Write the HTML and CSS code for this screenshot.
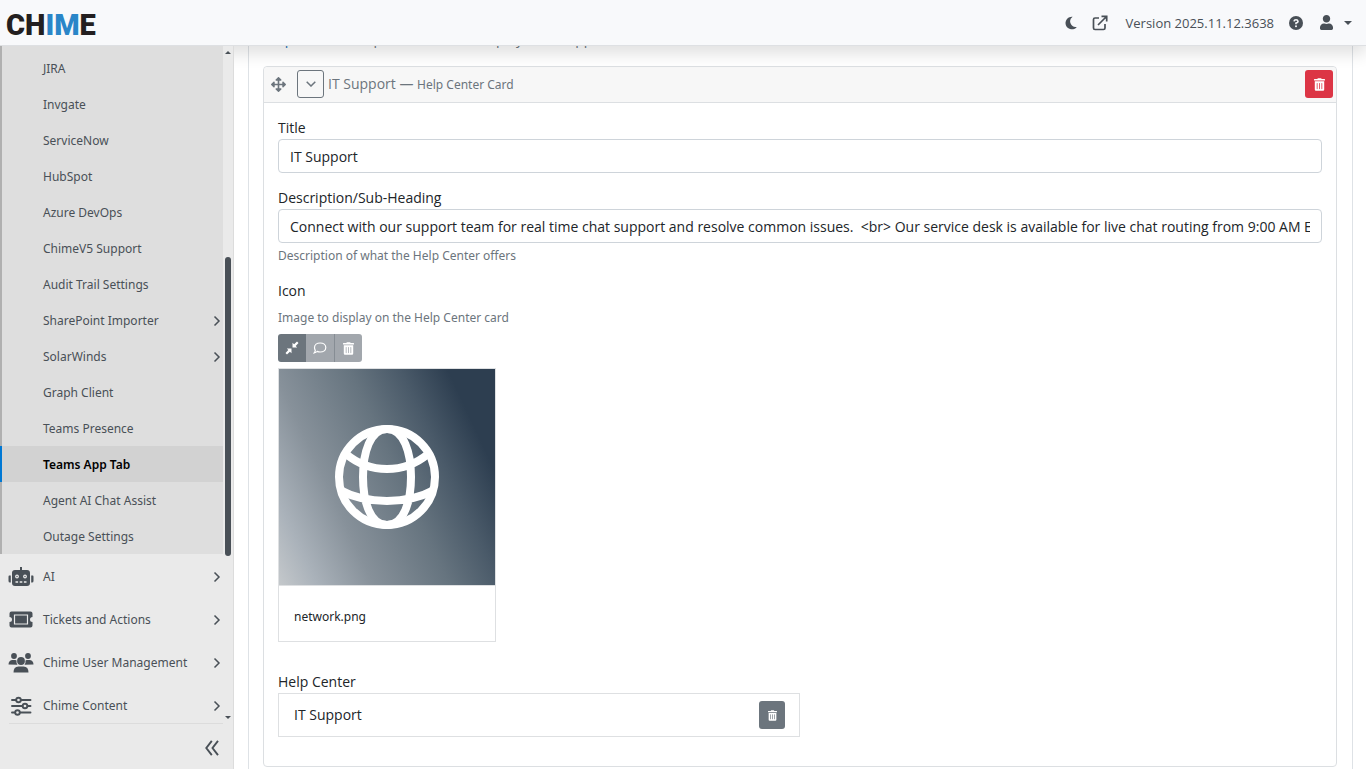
FILE: index.html
```html
<!DOCTYPE html>
<html lang="en">
<head>
<meta charset="utf-8">
<title>Chime - Teams App Tab</title>
<link rel="stylesheet" href="styles.css">
</head>
<body>
<svg class="defs" aria-hidden="true">
  <symbol id="trash" viewBox="0 0 448 512"><path fill="currentColor" d="M32 464a48 48 0 0 0 48 48h288a48 48 0 0 0 48-48V128H32zm272-256a16 16 0 0 1 32 0v224a16 16 0 0 1-32 0zm-96 0a16 16 0 0 1 32 0v224a16 16 0 0 1-32 0zm-96 0a16 16 0 0 1 32 0v224a16 16 0 0 1-32 0zM432 32H312l-9.400-18.700A24 24 0 0 0 281.100 0H166.800a23.720 23.720 0 0 0-21.400 13.300L136 32H16A16 16 0 0 0 0 48v32a16 16 0 0 0 16 16h416a16 16 0 0 0 16-16V48a16 16 0 0 0-16-16z"/></symbol>
  <symbol id="chev" viewBox="0 0 8 12"><path d="M1.500 1.500 6 6 1.500 10.500" fill="none" stroke="currentColor" stroke-width="1.500"/></symbol>
</svg>

<header class="topbar">
  <a class="logo" href="#">CH<span>IM</span>E</a>
  <div class="tools">
    <button class="tool moon" aria-label="Dark mode"><svg width="14" height="14" viewBox="0 0 14 14"><path fill="currentColor" d="M8.600.8A6.300 6.300 0 1 0 12.800 10.900 5.600 5.600 0 0 1 8.600.8z"/></svg></button>
    <a class="tool ext" href="#" aria-label="Open in new window"><svg width="16" height="16" viewBox="0 0 16 16" fill="none" stroke="currentColor" stroke-width="1.700"><path d="M7 3H3Q1.500 3 1.500 4.500V13q0 1.500 1.500 1.500h8.500q1.500 0 1.500-1.500V9M9.500 1.300h5.200v5.200M14.500 1.500 6 10"/></svg></a>
    <span class="version">Version 2025.11.12.3638</span>
    <button class="tool help" aria-label="Help"><svg width="14" height="14" viewBox="0 0 14 14"><circle cx="7" cy="7" r="7" fill="currentColor"/><path d="M5 5.400Q5.200 3.800 7 3.800T9 5.400Q9 6.500 7 7.100V8.300" fill="none" stroke="#f8f9fb" stroke-width="1.600"/><circle cx="7" cy="10.300" r="1" fill="#f8f9fb"/></svg></button>
    <button class="tool account" aria-label="Account"><svg width="13" height="15" viewBox="0 0 448 512"><path fill="currentColor" d="M224 256c70.700 0 128-57.300 128-128S294.700 0 224 0 96 57.300 96 128s57.300 128 128 128zm89.600 32h-16.700c-22.200 10.200-46.900 16-72.900 16s-50.600-5.800-72.900-16h-16.700C60.200 288 0 348.200 0 422.400V464c0 26.500 21.500 48 48 48h352c26.500 0 48-21.500 48-48v-41.600c0-74.200-60.200-134.400-134.400-134.400z"/></svg><svg width="8" height="4" viewBox="0 0 8 4"><path d="M0 0h8L4 4z" fill="currentColor"/></svg></button>
  </div>
</header>

<div class="shell">
  <aside class="sidebar">
    <div class="scroller">
      <nav class="menu">
        <ul class="submenu">
          <li><a href="#">JIRA</a></li>
          <li><a href="#">Invgate</a></li>
          <li><a href="#">ServiceNow</a></li>
          <li><a href="#">HubSpot</a></li>
          <li><a href="#">Azure DevOps</a></li>
          <li><a href="#">ChimeV5 Support</a></li>
          <li><a href="#">Audit Trail Settings</a></li>
          <li><a href="#">SharePoint Importer<svg class="chev"><use href="#chev"/></svg></a></li>
          <li><a href="#">SolarWinds<svg class="chev"><use href="#chev"/></svg></a></li>
          <li><a href="#">Graph Client</a></li>
          <li><a href="#">Teams Presence</a></li>
          <li><a href="#" class="active">Teams App Tab</a></li>
          <li><a href="#">Agent AI Chat Assist</a></li>
          <li><a href="#">Outage Settings</a></li>
        </ul>
        <ul class="groups">
          <li><a href="#"><svg class="gi" viewBox="0 0 26 22"><g fill="currentColor"><path d="M12 1h2v4h-2zM7 4h12q3 0 3 3v10q0 3-3 3H7q-3 0-3-3V7q0-3 3-3zM1 9.500h1.800v7H2q-1.500 0-1.500-1.500v-4Q.5 9.800 1 9.500zM23.200 9.500H25q.5.300.5 1.500v4q0 1.500-1.500 1.500h-.8z"/></g><g fill="#eaeaea"><circle cx="9" cy="10.500" r="1.900"/><circle cx="17" cy="10.500" r="1.900"/><path d="M7.500 15.200h2.600v1.600H7.500zM11.700 15.200h2.600v1.600h-2.600zM15.900 15.200h2.600v1.600h-2.600z"/></g><g fill="currentColor"><circle cx="9" cy="10.500" r=".7"/><circle cx="17" cy="10.500" r=".7"/></g></svg>AI<svg class="chev"><use href="#chev"/></svg></a></li>
          <li><a href="#"><svg class="gi" viewBox="0 0 26 22"><path fill="currentColor" d="M3.500 2.500h19q2 0 2 2V8a2.500 2.500 0 0 0 0 5v3.500q0 2-2 2h-19q-2 0-2-2V13a2.500 2.500 0 0 0 0-5V4.500q0-2 2-2z"/><path d="M6.500 6h13v9h-13z" fill="none" stroke="#eaeaea" stroke-width="1.200"/></svg>Tickets and Actions<svg class="chev"><use href="#chev"/></svg></a></li>
          <li><a href="#"><svg class="gi" viewBox="0 0 26 22" fill="currentColor"><circle cx="6" cy="4" r="2.900"/><circle cx="20" cy="4" r="2.900"/><circle cx="13" cy="9" r="3.900"/><path d="M.5 12.500Q.6 8.500 4 8h3.300q.8 0 1.200.5-.4 2.300 1 4.200zM25.500 12.500Q25.400 8.500 22 8h-3.300q-.8 0-1.200.5.400 2.300-1 4.200zM5.500 20.500q0-6 5-6h5q5 0 5 6z"/></svg>Chime User Management<svg class="chev"><use href="#chev"/></svg></a></li>
          <li><a href="#"><svg class="gi" viewBox="0 0 26 22" fill="none" stroke="currentColor" stroke-width="1.900" stroke-linecap="round"><path d="M4 5h4M13 5h9.500M4 11h10M20 11h2.500M4 17.500h3M12 17.500h10.500"/><circle cx="10.500" cy="5" r="2.300"/><circle cx="17" cy="11" r="2.300"/><circle cx="9.500" cy="17.500" r="2.300"/></svg>Chime Content<svg class="chev"><use href="#chev"/></svg></a></li>
        </ul>
      </nav>
      <div class="track" aria-hidden="true"><i class="up"></i><i class="thumb"></i><i class="down"></i></div>
    </div>
    <div class="side-foot"><button class="collapse" aria-label="Collapse menu"><svg width="14" height="16" viewBox="0 0 14 16" fill="none" stroke="currentColor" stroke-width="1.900"><path d="M6.800.8 1.300 8l5.500 7.200M13 .8 7.500 8l5.500 7.200"/></svg></button></div>
  </aside>

  <main class="main">
    <div class="panel">
      <p class="intro"><a href="#">Help Center</a> Setup for centers to display in the app</p>
      <section class="card">
        <div class="card-head">
          <svg class="move" viewBox="0 0 512 512"><path fill="currentColor" d="M352.201 425.775l-79.196 79.196c-9.373 9.373-24.568 9.373-33.941 0l-79.196-79.196c-15.119-15.119-4.411-40.971 16.971-40.970h51.162L228 284H127.196v51.162c0 21.382-25.851 32.090-40.971 16.971L7.029 272.937c-9.373-9.373-9.373-24.569 0-33.941L86.225 159.800c15.119-15.119 40.971-4.411 40.971 16.971V228H228V127.196h-51.230c-21.382 0-32.090-25.851-16.971-40.971l79.196-79.196c9.373-9.373 24.568-9.373 33.941 0l79.196 79.196c15.119 15.119 4.411 40.971-16.971 40.971h-51.162V228h100.804v-51.162c0-21.382 25.851-32.090 40.970-16.971l79.196 79.196c9.373 9.373 9.373 24.569 0 33.941L425.773 352.200c-15.119 15.119-40.971 4.411-40.970-16.971V284H284v100.804h51.230c21.382 0 32.090 25.851 16.971 40.971z"/></svg>
          <button class="toggle" aria-label="Collapse card"><svg width="10" height="6" viewBox="0 0 10 6"><path d="M.7.700 5 5 9.300.7" fill="none" stroke="currentColor" stroke-width="1.500"/></svg></button>
          <h2 class="card-title">IT Support — <small>Help Center Card</small></h2>
          <button class="btn danger" aria-label="Delete card"><svg class="bin"><use href="#trash"/></svg></button>
        </div>
        <div class="card-body">
          <div class="field">
            <label for="title">Title</label>
            <input id="title" type="text" value="IT Support">
          </div>
          <div class="field">
            <label for="desc">Description/Sub-Heading</label>
            <input id="desc" type="text" value="Connect with our support team for real time chat support and resolve common issues.  &lt;br&gt; Our service desk is available for live chat routing from 9:00 AM ET to 5:00 PM ET">
            <p class="hint">Description of what the Help Center offers</p>
          </div>
          <div class="field icon-field">
            <span class="label">Icon</span>
            <p class="hint">Image to display on the Help Center card</p>
            <div class="btn-group">
              <button class="btn grey" aria-label="Shrink"><svg width="14" height="14" viewBox="0 0 14 14"><path fill="currentColor" d="M7.500 6.500V1.800l1.600 1.500L12 .5 13.500 2l-2.800 2.900 1.500 1.600zM6.500 7.500v4.700l-1.600-1.500L2 13.500.5 12l2.800-2.900-1.500-1.600z"/></svg></button>
              <button class="btn grey" disabled aria-label="Comment"><svg width="14" height="14" viewBox="0 0 14 14"><path d="M7.200 2C10.400 2 12.800 3.900 12.800 6.500S10.400 11 7.200 11Q5.500 11 4.300 10.400 2.800 11.700 1.200 11.900 2.100 10.800 2.300 9.300 1.500 8.200 1.500 6.500C1.500 3.900 4 2 7.200 2z" fill="none" stroke="currentColor" stroke-width="1.200"/></svg></button>
              <button class="btn grey" disabled aria-label="Remove image"><svg class="bin"><use href="#trash"/></svg></button>
            </div>
            <figure class="thumbnail">
              <div class="picture"><svg viewBox="0 0 104 104" fill="none" stroke="#fff" stroke-width="8"><circle cx="52" cy="52" r="48"/><path d="M52 4C35 4 28 28 28 52s7 48 24 48 24-24 24-48S69 4 52 4zM11 29Q29 44 52 44t41-15M5 65q20 11 47 11t47-11"/></svg></div>
              <figcaption>network.png</figcaption>
            </figure>
          </div>
          <div class="field">
            <span class="label">Help Center</span>
            <div class="picked"><span>IT Support</span><button class="btn grey" aria-label="Remove help center"><svg class="bin small"><use href="#trash"/></svg></button></div>
          </div>
        </div>
      </section>
    </div>
  </main>
</div>
</body>
</html>
```
FILE: styles.css
```css
* { box-sizing: border-box; }
body {
  margin: 0;
  height: 100vh;
  overflow: hidden;
  display: flex;
  flex-direction: column;
  font-family: "Open Sans", "Noto Sans", sans-serif;
  font-size: 14px;
  line-height: 20px;
  color: #212529;
  background: #fff;
}
ul, p, h2, figure { margin: 0; padding: 0; }
ul { list-style: none; }
a { color: inherit; text-decoration: none; }
button { font: inherit; color: inherit; border: 0; padding: 0; background: none; display: flex; align-items: center; justify-content: center; }
.defs { position: absolute; width: 0; height: 0; }

.topbar {
  position: relative;
  z-index: 2;
  flex: none;
  height: 46px;
  padding: 0 14px 0 6px;
  display: flex;
  align-items: center;
  justify-content: space-between;
  background: #f8f9fb;
  border-bottom: 1px solid #dee0e3;
  box-shadow: 0 8px 16px rgba(0, 0, 0, .12);
}
.logo { font: 900 29px/44px Roboto, sans-serif; color: #231f20; padding-top: 4px; }
.logo span { color: #2a86c8; }
.tools { display: flex; align-items: center; color: #495057; }
.moon { margin-right: 14px; }
.ext { display: flex; margin-right: 18px; }
.version { font-size: 13px; margin-right: 15px; }
.help { margin-right: 17px; }
.account { gap: 11px; }

.shell { flex: 1; min-height: 0; display: flex; }
.sidebar {
  position: relative;
  z-index: 3;
  flex: none;
  width: 234px;
  display: flex;
  flex-direction: column;
  background: #eaeaea;
  border-right: 1px solid #dcdcdc;
  color: #495057;
}
.scroller { flex: 1; min-height: 0; display: flex; }
.menu { flex: 1; overflow: hidden; font-family: "Noto Sans", sans-serif; font-size: 12px; }
.menu a { display: flex; align-items: center; padding-right: 2px; }
.submenu { padding-top: 4px; background: #dedede; border-left: 2px solid #b0b0b0; }
.submenu a { height: 36px; padding-top: 2px; padding-left: 41px; }
.submenu .active { margin-left: -2px; border-left: 2px solid #0078d4; background: #d2d2d2; color: #000; font-weight: 600; }
.groups { padding-top: 1px; }
.groups a { height: 43px; padding-left: 8px; gap: 9px; }
.gi { width: 26px; height: 22px; flex: none; }
.chev { width: 8px; height: 12px; margin-left: auto; flex: none; }
.track { width: 10px; display: flex; flex-direction: column; align-items: center; }
.up { margin-top: 5px; border: 3px solid transparent; border-top: 0; border-bottom-color: #495057; }
.thumb { margin-top: auto; width: 6px; height: 299px; border-radius: 3px; background: #495057; }
.down { margin: 160px 0 4px; border: 3px solid transparent; border-bottom: 0; border-top-color: #495057; }
.side-foot { flex: none; height: 46px; margin: 0 10px 0 9px; padding: 3px 4px 0 0; border-top: 1px solid #dcdcdc; display: flex; align-items: center; justify-content: flex-end; }

.main { flex: 1; min-width: 0; padding: 0 13px 0 14px; }
.panel { display: flow-root; min-height: 100%; padding: 0 15px 0 14px; border: solid #dee2e6; border-width: 0 1px; }
.intro { margin: -17px 0 17px; color: #6c757d; }
.intro a { color: #1b6fb5; }
.card { border: 1px solid #dcdfe2; border-radius: 4px; }
.card-head { height: 36px; padding: 0 3px 1px 7px; display: flex; align-items: center; background: #f7f7f7; border-bottom: 1px solid #dcdfe2; border-radius: 4px 4px 0 0; color: #6c757d; }
.move { width: 15px; height: 15px; }
.toggle { width: 27px; height: 28px; margin: 0 4px 0 11px; border: 1px solid #6c757d; border-radius: 3px; }
.card-title { flex: 1; font-size: 14px; font-weight: 400; }
.card-title small { font-family: "Noto Sans", sans-serif; font-size: 12px; }
.btn { width: 28px; height: 28px; border-radius: 3px; color: #fff; }
.danger { background: #dc3545; }
.grey { background: #6c757d; }
.bin { width: 11px; height: 13px; }
.small { width: 9px; height: 11px; }
.card-body { padding: 15px 14px 29px; display: flex; flex-direction: column; gap: 15px; }
.field { display: flex; flex-direction: column; align-items: flex-start; }
.field label, .label { margin-bottom: 1px; }
.field input { width: 100%; height: 34px; padding: 0 11px; border: 1px solid #ced4da; border-radius: 4px; font: inherit; color: #212529; background: #fff; }
.hint { margin-top: 3px; font-family: "Noto Sans", sans-serif; font-size: 12px; color: #6c757d; }
.icon-field { margin-bottom: 15px; }
.icon-field .hint { margin-top: 6px; }
.btn-group { display: flex; margin: 6px 0; border-radius: 3px; overflow: hidden; }
.btn-group .btn { border-radius: 0; }
.btn-group .btn:disabled { background: #a2a7ad; }
.btn-group .btn + .btn + .btn { border-left: 1px solid #868d94; }
.thumbnail { width: 218px; border: 1px solid #dee0e2; }
.picture { aspect-ratio: 1; display: flex; align-items: center; justify-content: center; background: linear-gradient(65deg, #c4c8cb 0%, #aab2ba 12%, #87919a 30%, #66747f 54%, #4a5a69 70%, #2d3e50 85%); }
.picture svg { width: 104px; height: 104px; }
figcaption { border-top: 1px solid #dee0e2; padding: 21px 15px 14px; font-family: "Noto Sans", sans-serif; font-size: 12px; }
.picked { width: 50%; height: 44px; padding: 0 14px 0 15px; display: flex; align-items: center; justify-content: space-between; border: 1px solid #dee0e2; }
.picked .btn { width: 26px; }
```
